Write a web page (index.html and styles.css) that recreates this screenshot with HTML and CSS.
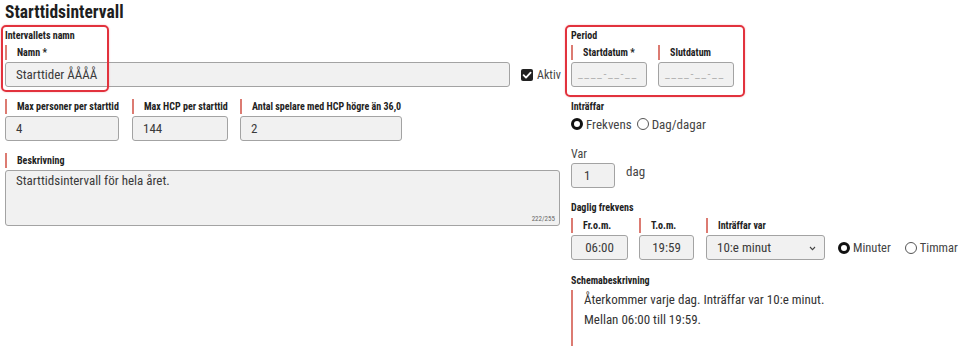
FILE: index.html
```html
<!DOCTYPE html>
<html lang="sv">
<head>
    <meta charset="UTF-8">
    <title>Starttidsintervall</title>
    <link rel="stylesheet" href="styles.css">
</head>
<body>
    <h1 class="title">Starttidsintervall</h1>

    <div class="columns">
        <!-- Vänster kolumn -->
        <div class="col">
            <section class="group">
                <div class="group-label">Intervallets namn</div>
                <div class="row">
                    <div class="field w-name">
                        <div class="field-label">Namn *</div>
                        <div class="input">Starttider ÅÅÅÅ</div>
                    </div>
                    <div class="check">
                        <span class="checkbox">
                            <svg width="12" height="12" viewBox="0 0 12 12"><path d="M2.6 6.2 L5 8.6 L9.6 3.6" fill="none" stroke="#fff" stroke-width="1.8" stroke-linecap="round" stroke-linejoin="round"/></svg>
                        </span>
                        Aktiv
                    </div>
                </div>
                <span class="highlight hl-name"></span>
            </section>

            <div class="row row-numbers">
                <div class="field w-pers">
                    <div class="field-label">Max personer per starttid</div>
                    <div class="input">4</div>
                </div>
                <div class="field w-hcp">
                    <div class="field-label">Max HCP per starttid</div>
                    <div class="input">144</div>
                </div>
                <div class="field w-antal">
                    <div class="field-label">Antal spelare med HCP högre än 36,0</div>
                    <div class="input">2</div>
                </div>
            </div>

            <div class="field field-desc">
                <div class="field-label">Beskrivning</div>
                <div class="input textarea">
                    Starttidsintervall för hela året.
                    <span class="counter">222/255</span>
                </div>
            </div>
        </div>

        <!-- Höger kolumn -->
        <div class="col">
            <section class="group">
                <div class="group-label">Period</div>
                <div class="row">
                    <div class="field w-date">
                        <div class="field-label">Startdatum *</div>
                        <div class="input placeholder">____-__-__</div>
                    </div>
                    <div class="field w-date">
                        <div class="field-label">Slutdatum</div>
                        <div class="input placeholder">____-__-__</div>
                    </div>
                </div>
                <span class="highlight hl-period"></span>
            </section>

            <div class="block">
                <div class="group-label">Inträffar</div>
                <div class="radios">
                    <span class="radio checked"></span><span class="radio-text">Frekvens</span>
                    <span class="radio"></span><span class="radio-text">Dag/dagar</span>
                </div>
            </div>

            <div class="block block-var">
                <div class="plain-label">Var</div>
                <div class="row row-var">
                    <div class="input w-var">1</div>
                    <span class="unit">dag</span>
                </div>
            </div>

            <div class="block">
                <div class="group-label">Daglig frekvens</div>
                <div class="row row-daily">
                    <div class="field w-from">
                        <div class="field-label">Fr.o.m.</div>
                        <div class="input center">06:00</div>
                    </div>
                    <div class="field w-to">
                        <div class="field-label">T.o.m.</div>
                        <div class="input center">19:59</div>
                    </div>
                    <div class="field w-select">
                        <div class="field-label">Inträffar var</div>
                        <div class="input select">
                            10:e minut
                            <svg class="chevron" width="7" height="5" viewBox="0 0 7 5"><path d="M1 1 L3.5 3.6 L6 1" fill="none" stroke="#444" stroke-width="1.1"/></svg>
                        </div>
                    </div>
                    <div class="radios radios-unit">
                        <span class="radio checked"></span><span class="radio-text">Minuter</span>
                        <span class="radio"></span><span class="radio-text">Timmar</span>
                    </div>
                </div>
            </div>

            <div class="block block-summary">
                <div class="group-label">Schemabeskrivning</div>
                <div class="summary">
                    Återkommer varje dag. Inträffar var 10:e minut.<br>
                    Mellan 06:00 till 19:59.
                </div>
            </div>
        </div>
    </div>
</body>
</html>
```

FILE: styles.css
```css
/* Grundstil */
body {
    margin: 0;
    padding: 0 5px;
    font-family: 'Liberation Sans Narrow', 'Roboto Condensed', 'DejaVu Sans Condensed', sans-serif;
    color: #222;
    background: #fff;
    overflow: hidden;
}

.title {
    margin: 1px 0 6px;
    font-size: 17.5px;
    line-height: 22px;
    font-weight: bold;
    color: #1e1e1e;
}

/* Två kolumner */
.columns {
    display: grid;
    grid-template-columns: 555px 1fr;
    column-gap: 11px;
}

.col {
    display: flex;
    flex-direction: column;
}

.group {
    position: relative;
}

.group-label {
    font-size: 10px;
    line-height: 14px;
    font-weight: bold;
    color: #222;
}

.plain-label {
    font-size: 12px;
    line-height: 14px;
    color: #444;
}

.row {
    display: flex;
    align-items: flex-start;
}

.field {
    display: flex;
    flex-direction: column;
    flex-shrink: 0;
}

.group .row {
    margin-top: 2px;
    gap: 11px;
}

.field-label {
    border-left: 2px solid #dc7b72;
    padding-left: 10px;
    font-size: 10px;
    line-height: 15px;
    font-weight: bold;
    color: #222;
    white-space: nowrap;
}

.input {
    box-sizing: border-box;
    height: 25px;
    margin-top: 2px;
    padding: 0 10px;
    border: 1px solid #a3a3a3;
    border-radius: 3px;
    background: #f1f1f1;
    font-size: 13px;
    line-height: 23px;
    color: #3a3a3a;
    white-space: nowrap;
}

.input.center {
    text-align: center;
    padding: 0;
}

.input.placeholder {
    padding: 0 6px;
    font-size: 12px;
    color: #b5b5b5;
    letter-spacing: 1.5px;
}

/* Bredder */
.w-name { width: 505px; }
.w-pers { width: 114px; }
.w-hcp { width: 96px; }
.w-antal { width: 162px; }
.w-date { width: 76px; }
.w-var { width: 44px; }
.w-from { width: 57px; }
.w-to { width: 55px; }
.w-select { width: 119px; }

/* Checkbox */
.check {
    display: flex;
    align-items: center;
    gap: 4px;
    height: 25px;
    margin-top: 17px;
    font-size: 12px;
    color: #444;
    white-space: nowrap;
}

.checkbox {
    display: block;
    width: 12px;
    height: 12px;
    border-radius: 2px;
    background: #222;
}

.checkbox svg {
    display: block;
}

/* Röda markeringar */
.highlight {
    position: absolute;
    border: 2px solid #e2323d;
    border-radius: 5px;
    box-shadow: 0 0 2px rgba(226, 50, 61, 0.35);
    pointer-events: none;
}

.hl-name {
    left: -4px;
    top: -4px;
    width: 104px;
    height: 63px;
}

.hl-period {
    left: -6px;
    top: -4px;
    width: 176px;
    height: 68px;
}

.row-numbers {
    margin-top: 12px;
    gap: 13px;
}

.row-numbers .w-hcp {
    margin-right: -1px;
}

.field-desc {
    margin-top: 12px;
}

.textarea {
    position: relative;
    height: 56px;
    line-height: 20px;
}

.counter {
    position: absolute;
    right: 4px;
    bottom: 1px;
    font-size: 7px;
    line-height: 9px;
    color: #666;
}

/* Högerkolumn */
.block {
    margin-top: 13px;
}

.block-var {
    margin-top: 14px;
}

.radios {
    display: flex;
    align-items: center;
    height: 18px;
    margin-top: 1px;
    font-size: 13px;
    color: #444;
}

.radio {
    box-sizing: border-box;
    flex-shrink: 0;
    width: 12px;
    height: 12px;
    border: 1px solid #555;
    border-radius: 50%;
    background: #fff;
}

.radio.checked {
    border: 3.5px solid #111;
}

.radio-text {
    margin-left: 3px;
    margin-right: 5px;
}

.row-var {
    margin-top: 2px;
    gap: 11px;
}

.w-var {
    margin-top: 0;
    padding-left: 12px;
}

.unit {
    font-size: 13px;
    line-height: 18px;
    color: #444;
}

.row-daily {
    margin-top: 3px;
    gap: 11px;
}

.w-select {
    margin-left: 1px;
}

.select {
    position: relative;
}

.chevron {
    position: absolute;
    right: 8px;
    top: 10px;
}

.radios-unit {
    height: 25px;
    margin-top: 17px;
    margin-left: 2px;
    font-size: 12.5px;
}

.radios-unit .radio-text {
    margin-right: 14px;
}

.block-summary {
    margin-top: 14px;
}

.summary {
    margin-top: 2px;
    min-height: 70px;
    border-left: 2px solid #dc7b72;
    padding-left: 11px;
    font-size: 13px;
    line-height: 20px;
    color: #333;
}
```
